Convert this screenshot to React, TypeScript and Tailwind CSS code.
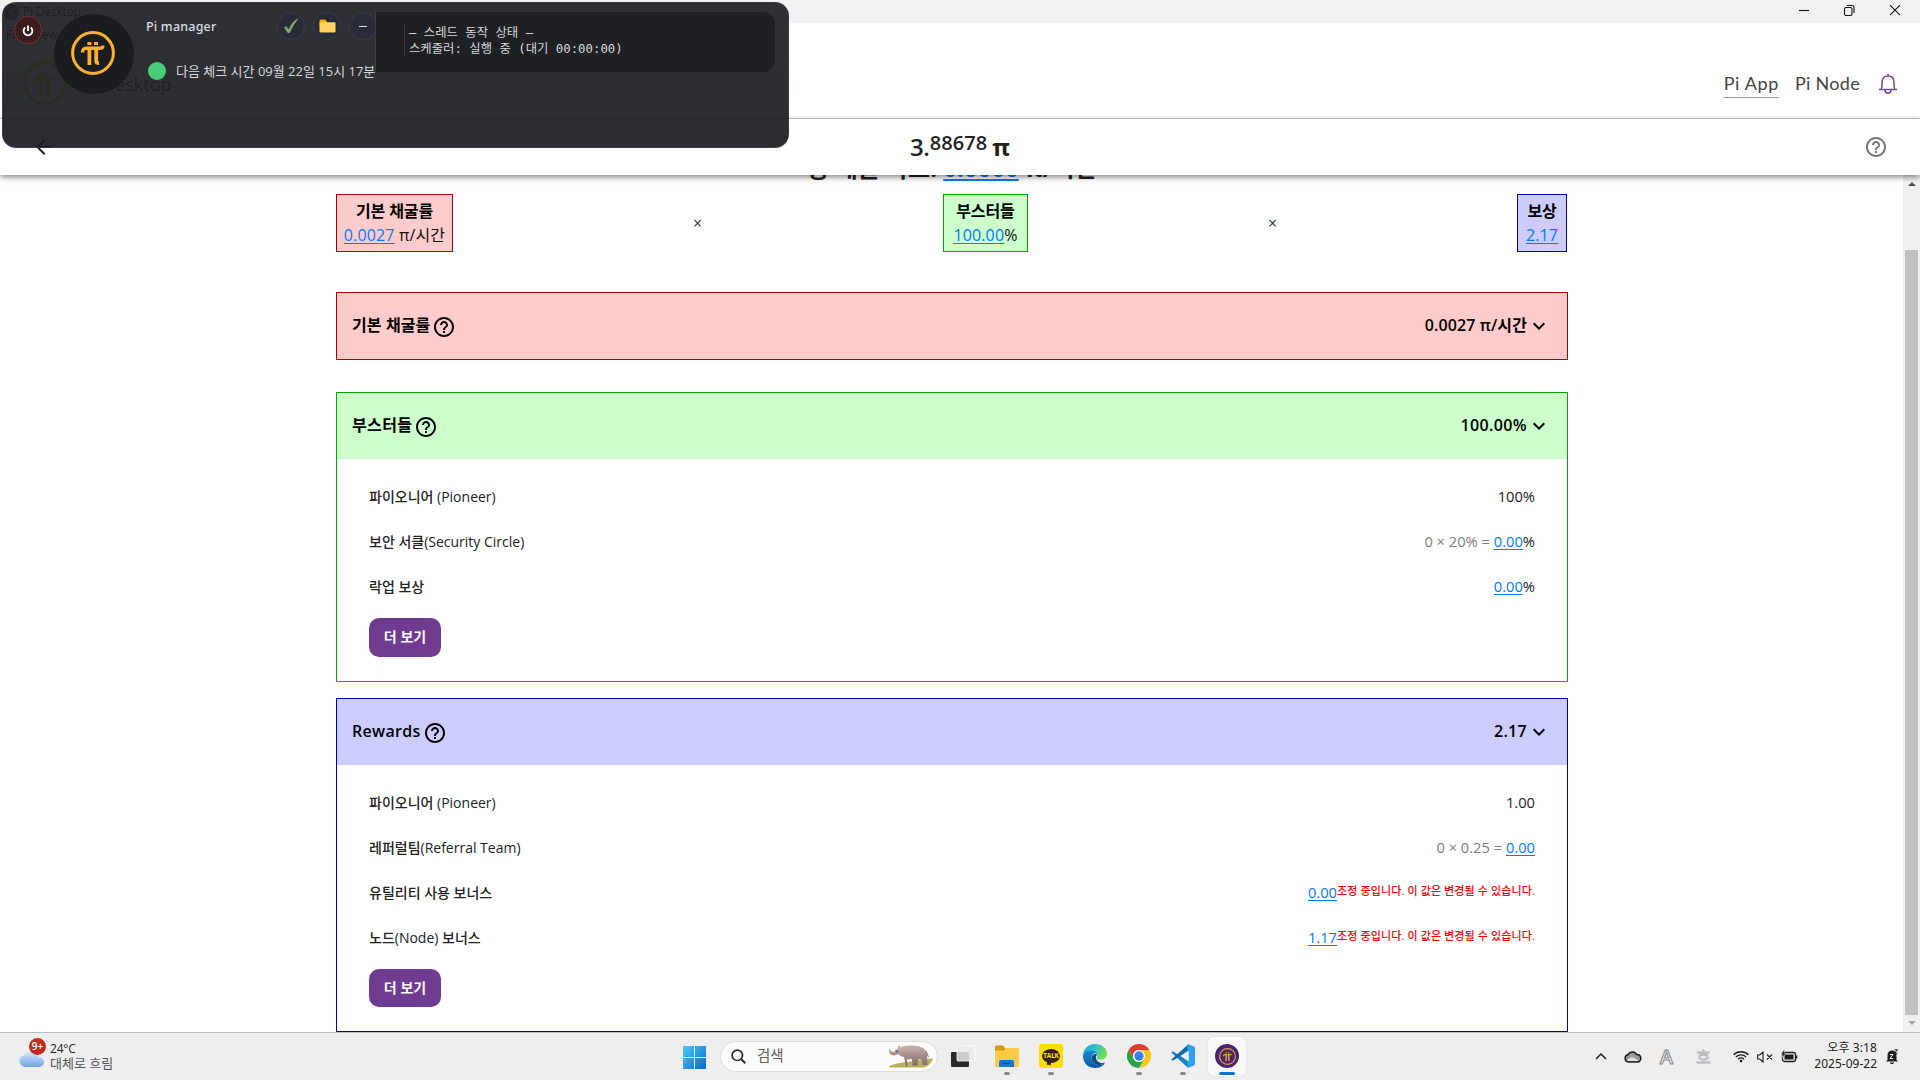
import React from 'react';
import { MdArrowBack, MdExpandMore, MdHelpOutline } from 'react-icons/md';

const KR = "font-['Open_Sans','Noto_Sans_CJK_KR',sans-serif]";

function PiMark({ className, color }: { className?: string; color: string }) {
  return (
    <svg viewBox="0 0 44 44" className={className} fill="none" stroke={color}>
      <circle cx="22" cy="22" r="20.4" strokeWidth="3" />
      <rect x="16.4" y="11" width="4" height="3" fill={color} stroke="none" />
      <rect x="23" y="11" width="4" height="3" fill={color} stroke="none" />
      <path d="M11.6 21.5c0-3 .8-4.3 3.6-4.3h14.4c1.8 0 2.2-.8 2.2-2.6" strokeWidth="3.4" />
      <path d="M18.4 17v17M25.2 17v12.8c0 1.800.8 2.400 2.800 2.400" strokeWidth="3.8" />
    </svg>
  );
}

function TitleBar() {
  return (
    <div className="flex h-[23px] shrink-0 items-center justify-between bg-[#f2f2f2] pl-[3px] pr-[19px]">
      <div className="flex items-center gap-1 text-[12px] text-black">
        <div className="flex h-4 w-4 items-center justify-center rounded-full bg-[#5b2d91]">
          <PiMark color="#f8b133" className="h-3 w-3" />
        </div>
        <span className="leading-[23px] tracking-[-0.2px]">Pi Desktop</span>
      </div>
      <svg width="102" height="12" viewBox="0 0 102 12" fill="none" stroke="#111" strokeWidth="1.1" className="-mt-1">
        <path d="M0 6.500H10" />
        <rect x="45.500" y="3.500" width="7.500" height="8" rx="1.500" />
        <path d="M47.800 1.500H53a2 2 0 0 1 2 2V9" />
        <path d="M91 1.200l10 10M101 1.200l-10 10" />
      </svg>
    </div>
  );
}

function AppHeader() {
  return (
    <div className="flex h-[96px] shrink-0 flex-col border-b border-[#ccc] bg-white">
      <div className="h-6 pl-[6px] pt-1 text-[12px] leading-4 text-black">File&nbsp; View&nbsp; Help</div>
      <div className="flex flex-1 items-start justify-between pl-[23px] pr-[22px] pt-[14px]">
        <div className="flex items-center gap-[15px] text-[18px] text-[#333]">
          <PiMark color="#f8b133" className="h-11 w-11" />
          <span className="mt-[2px]">Pi Desktop</span>
        </div>
        <div className="flex items-start text-[18px] leading-[25px] text-[#444] font-['Lato']">
          <span className="mt-[10px] h-[27px] border-b border-[#999] tracking-[0.65px]">Pi App</span>
          <span className="ml-4 mt-[10px] tracking-[0.3px]">Pi Node</span>
          <svg width="20" height="22" viewBox="0 0 20 22" fill="none" stroke="#7b4a9e" strokeWidth="1.600" className="ml-[18px] mt-3">
            <path d="M1 16.500h18M3.200 16.200C4.200 14.500 4 12.500 4 9.500 4 5.500 6.300 3 10 3s6 2.500 6 6.500c0 3 -.2 5 .8 6.700M10 3V1M7 16.700c.2 4.600 5.800 4.600 6 0" />
          </svg>
        </div>
      </div>
    </div>
  );
}

function SubHeader() {
  return (
    <div className="z-10 grid h-[56px] shrink-0 grid-cols-3 items-center bg-white pl-8 pr-8 shadow-[0_2px_6px_rgba(0,0,0,0.5)]">
      <MdArrowBack className="h-6 w-6 text-[#222]" />
      <div className="flex items-baseline justify-center text-[#222]">
        <span className="text-[24px] font-semibold tracking-[-0.3px]">3.</span>
        <span className="relative -top-[6px] text-[20px] font-semibold tracking-[0.1px]">88678</span>
        <span className="ml-[5px] text-[24px] font-bold">π</span>
      </div>
      <MdHelpOutline className="h-6 w-6 justify-self-end text-[#757575]" />
    </div>
  );
}

function Link({ children }: { children: React.ReactNode }) {
  return <span className="text-[#007bff] underline underline-offset-2">{children}</span>;
}

function FactorCard({ title, tone, children }: { title: string; tone: string; children: React.ReactNode }) {
  return (
    <div className={`flex h-[58px] flex-col items-center border pt-1 text-[16px] leading-6 text-[#111] ${tone}`}>
      <span className="font-bold tracking-[-0.1px] text-black">{title}</span>
      <span className="whitespace-nowrap tracking-[0.15px]">{children}</span>
    </div>
  );
}

function PanelHead({ title, value, tone }: { title: string; value: string; tone: string }) {
  return (
    <div className={`flex h-[66px] items-center justify-between pl-[15px] pr-4 text-[16px] font-semibold text-black ${tone}`}>
      <div className="flex items-center gap-[3px]">
        <span className="-mt-[3px]">{title}</span>
        <MdHelpOutline className="-ml-px mt-[1px] h-6 w-6" />
      </div>
      <div className="flex items-center">
        <span className="-mt-[2px]">{value}</span>
        <MdExpandMore className="h-6 w-6" />
      </div>
    </div>
  );
}

function Row({ label, children }: { label: string; children: React.ReactNode }) {
  return (
    <div className="flex h-[45px] items-center justify-between pb-[2px] text-[14px] text-[#222]">
      <span className="font-medium">{label}</span>
      <span className="-mr-px flex items-center pr-px text-[14.700px]">{children}</span>
    </div>
  );
}

function MoreButton({ height }: { height: string }) {
  return (
    <button className={`mt-2 block w-[72px] rounded-[10px] bg-[#703c91] pb-[2px] text-[14px] font-bold text-white ${height}`}>더 보기</button>
  );
}

function Notice() {
  return <span className="-mt-[2px] text-[11px] font-medium text-[#f00] tracking-[0.12px]">조정 중입니다. 이 값은 변경될 수 있습니다.</span>;
}

function Content() {
  return (
    <div className="flex flex-1 justify-center overflow-hidden pl-px">
      <div className="w-[1232px]">
        <div className="-mt-[25px] h-[44px] whitespace-nowrap text-center text-[24px] font-bold leading-[36px] text-[#222]">
          총 채굴 속도: <Link>0.0060</Link> π/시간
        </div>
        <div className="flex w-[1231px] items-center justify-between">
          <FactorCard title="기본 채굴률" tone="w-[117px] bg-[#fcc] border-[#a00]"><Link>0.0027</Link> π/시간</FactorCard>
          <span className="text-[16px] text-[#333]">×</span>
          <FactorCard title="부스터들" tone="ml-px w-[85px] bg-[#cfc] border-[#0a0]"><Link>100.00</Link>%</FactorCard>
          <span className="text-[16px] text-[#333]">×</span>
          <FactorCard title="보상" tone="w-[50px] bg-[#ccf] border-[#00a]"><Link>2.17</Link></FactorCard>
        </div>
        <section className="mt-10 border border-[#a00]">
          <PanelHead title="기본 채굴률" value="0.0027 π/시간" tone="bg-[#fcc] tracking-[0.1px]" />
        </section>
        <section className="mt-8 h-[290px] border border-[#0a0]">
          <PanelHead title="부스터들" value="100.00%" tone="bg-[#cfc] tracking-[0.35px]" />
          <div className="px-8 pt-4">
            <Row label="파이오니어 (Pioneer)">100%</Row>
            <Row label="보안 서클(Security Circle)">
              <span className="text-[#7d7d7d]">0 × 20% =&nbsp;</span><Link>0.00</Link>%
            </Row>
            <Row label="락업 보상"><Link>0.00</Link>%</Row>
            <MoreButton height="h-[39px]" />
          </div>
        </section>
        <section className="mt-4 h-[334px] border border-[#00a]">
          <PanelHead title="Rewards" value="2.17" tone="bg-[#ccf] tracking-[0.3px]" />
          <div className="px-8 pt-4">
            <Row label="파이오니어 (Pioneer)">1.00</Row>
            <Row label="레퍼럴팀(Referral Team)"><span className="text-[#7d7d7d]">0 × 0.25 =&nbsp;</span><Link>0.00</Link></Row>
            <Row label="유틸리티 사용 보너스"><Link>0.00</Link><Notice /></Row>
            <Row label="노드(Node) 보너스"><Link>1.17</Link><Notice /></Row>
            <MoreButton height="h-[38px]" />
          </div>
        </section>
      </div>
    </div>
  );
}

function ScrollBar() {
  return (
    <div className="flex w-[17px] flex-col items-center bg-[#f1f1f1]">
      <svg width="8" height="4" viewBox="0 0 8 4" className="mt-[7px]"><path d="M0 4L4 0l4 4z" fill="#505050" /></svg>
      <div className="mt-[64px] h-[765px] w-[13px] bg-[#c1c1c1]" />
      <svg width="8" height="4" viewBox="0 0 8 4" className="mt-[6px]"><path d="M0 0l4 4 4-4z" fill="#a3a3a3" /></svg>
    </div>
  );
}

const roundBtn = 'flex h-7 w-7 items-center justify-center rounded-full border border-[#393b47] bg-[#292c36]';

function ManagerWindow() {
  return (
    <div className="absolute left-[2px] top-[2px] z-20 flex h-[146px] w-[787px] rounded-[14px] border border-[#44454a]/60 bg-linear-to-b from-[#202126]/93 to-[#1b1c21]/93">
      <div className="ml-[11px] mt-[13px] flex h-7 w-7 shrink-0 items-center justify-center rounded-full border border-[#7a2e2e] bg-[#3a1c1e]">
        <svg width="12" height="12" viewBox="0 0 12 12" fill="none" stroke="#fff" strokeWidth="1.800" className="mt-[2px]"><path d="M6 .5V6M3.200 2.500a4.400 4.400 0 1 0 5.600 0" /></svg>
      </div>
      <div className="ml-3 mt-[11px] flex h-20 w-20 shrink-0 items-center justify-center rounded-full bg-[#191b1f]/95">
        <PiMark color="#f8b133" className="-mt-[2px] -ml-[2px] h-11 w-11" />
      </div>
      <div className="ml-3 mt-[9px] w-[229px] shrink-0">
        <div className="flex h-7 items-center">
          <span className="mt-[2px] w-[131px] shrink-0 text-[12.500px] font-medium tracking-[0.2px] text-[#dcdce0] font-['Noto_Sans']">Pi manager</span>
          <div className="flex shrink-0 gap-2">
            <div className={roundBtn}>
              <svg width="16" height="16" viewBox="0 0 16 16"><path d="M1 9.500L3.200 8l2.300 3.500C8 6.500 10.500 3 14.500.5l.5.800C11.500 5.500 9 10 6.800 15H4.800z" fill="#86a56c" /></svg>
            </div>
            <div className={roundBtn}>
              <svg width="17" height="14" viewBox="0 0 17 14"><path d="M.5 2A1.500 1.500 0 0 1 2 .5h4l2 2V6H.5z" fill="#f9a602" /><rect x=".5" y="3.200" width="16" height="10.300" rx="1.200" fill="#ffd35c" /></svg>
            </div>
            <div className={roundBtn}><span className="h-px w-2 bg-[#ddd]" /></div>
          </div>
        </div>
        <div className="mt-[22px] flex items-center pl-[2px]">
          <span className="h-[18px] w-[18px] shrink-0 rounded-full bg-[#4bcd76]" />
          <span className="ml-[10px] whitespace-nowrap text-[13px] leading-[18px] text-[#d8d9dd]">다음 체크 시간 09월 22일 15시 17분</span>
        </div>
      </div>
      <div className="mt-[9px] h-[60px] w-[400px] shrink-0 rounded-r-xl border-l border-[#3c3d42] bg-[#1f2024] pl-7 pt-[13px]">
        <div className="h-8 whitespace-pre border-l border-[#393a3f] pl-1 text-[12.350px] leading-4 text-[#d8d9dc] font-['DejaVu_Sans_Mono','Noto_Sans_CJK_KR',monospace]">
          {'— 스레드 동작 상태 —\n스케줄러: 실행 중 (대기 00:00:00)'}
        </div>
      </div>
    </div>
  );
}

function Slot({ dot, active, children }: { dot?: boolean; active?: boolean; children: React.ReactNode }) {
  return (
    <div className={`flex h-[39px] w-[38px] flex-col items-center rounded-[5px] pt-[7px] ${active ? 'bg-[#f9f9f9] shadow-[0_0_1px_rgba(0,0,0,0.25)]' : ''}`}>
      {children}
      {dot && <span className="mt-1 h-[3px] w-[6px] rounded-full bg-[#8a8a8a]" />}
      {active && <span className="mt-1 h-[3px] w-4 rounded-full bg-[#0f74cc]" />}
    </div>
  );
}

function Rhino() {
  return (
    <svg width="46" height="26" viewBox="0 0 46 26">
      <defs><linearGradient id="hide" x1="0" y1="0" x2="0" y2="1"><stop offset="0" stopColor="#cdb8ac" /><stop offset="1" stopColor="#80646c" /></linearGradient></defs>
      <path d="M1 23.500c3-2.500 9-3 14-4 10-1 22-4 30-4-1 4-5 8-9 9H5c-2 0-4 0-4-1z" fill="#b5b257" />
      <path d="M1 5.500c1 2 3 3.500 5 3.500 1-2 2.500-3 4-3.500L10.500 1.500l2 3c2.500-1.500 5-2 9-2 6 0 13 .5 16 5 2 3 2 5 1.500 8l.5 6.500h-5l-.5-5-3.500-1-1 6.500h-5l-.5-6.500-5 .5.500 7H18l-2-9.500c-3-.5-4-1.500-5.500-3L6 12.500c-2 0-4.500-1-4.500-3C1 8.500 1 7 1 5.500z" fill="url(#hide)" />
      <path d="M38 8l2.500 6" stroke="#8a6e70" strokeWidth="1" />
      <circle cx="9" cy="8.500" r=".8" fill="#33262a" />
    </svg>
  );
}

function Taskbar() {
  return (
    <div className="flex h-[48px] shrink-0 items-center border-t border-[#b9b9b9] bg-[#eee]">
      <div className="flex w-[682px] items-center pl-[18px]">
        <div className="relative h-8 w-8">
          <svg width="28" height="32" viewBox="0 0 28 32">
            <defs><linearGradient id="cl" x1="0" y1="0" x2="0" y2="1"><stop offset="0" stopColor="#d8e9fb" /><stop offset="1" stopColor="#6fa4e6" /></linearGradient></defs>
            <path d="M7 26a6 6 0 0 1-.5-11.900A8 8 0 0 1 21 16a5 5 0 0 1 0 10z" fill="url(#cl)" />
          </svg>
          <span className="absolute left-[11px] top-[-3px] flex h-[17px] w-[17px] items-center justify-center rounded-full bg-[#c42b1c] text-[10px] font-semibold text-white">9+</span>
        </div>
        <div className="-mt-[2px] text-[12px] leading-[15px] text-[#222]"><div className="tracking-[-0.2px]">24°C</div><div className="text-[13px] text-[#555]">대체로 흐림</div></div>
      </div>
      <div className="flex w-[580px] items-center">
        <svg width="24" height="24" viewBox="0 0 24 24">
          <defs><linearGradient id="win" x1="0" y1="0" x2="1" y2="1"><stop offset="0" stopColor="#4cc9fa" /><stop offset="1" stopColor="#0669c8" /></linearGradient></defs>
          <path d="M1 1h11v11H1zM13 1h11v11H13zM1 13h11v11H1zM13 13h11v11H13z" fill="url(#win)" />
        </svg>
        <div className="-mt-px ml-[14px] flex h-[31px] w-[218px] items-center rounded-full border border-[#dedede] bg-[#fbfbfb] pl-[10px] pr-[3px]">
          <svg width="15" height="15" viewBox="0 0 15 15" fill="none" stroke="#2b2b2b" strokeWidth="1.700"><circle cx="6.300" cy="6.300" r="5.200" /><path d="M10 10l4.300 4.300" strokeWidth="2" /></svg>
          <span className="ml-[11px] flex-1 text-[14.500px] text-[#5c5c5c]">검색</span>
          <Rhino />
        </div>
        <div className="ml-[6px] flex gap-[6px]">
          <Slot>
            <svg width="26" height="24" viewBox="0 0 26 24"><rect x="1" y="8" width="18" height="15" rx="1" fill="#2a2a2a" /><rect x="7" y="2" width="18" height="15" rx="1" fill="#e9e9e9" fillOpacity=".85" stroke="#fff" strokeWidth=".8" /></svg>
          </Slot>
          <Slot dot>
            <svg width="24" height="24" viewBox="0 0 24 24"><path d="M0 3a1.500 1.500 0 0 1 1.500-1.500H8l2.500 3V8H0z" fill="#d9960f" /><path d="M0 6.500h9l2-2.500h11.500A1.500 1.500 0 0 1 24 5.500V22a1 1 0 0 1-1 1H1a1 1 0 0 1-1-1z" fill="#fecb45" /><path d="M4 18a2 2 0 0 1 2-2h11a2 2 0 0 1 2 2v5H4z" fill="#1478cf" /><path d="M8 19.500h7" stroke="#0a559e" strokeWidth="1.200" /></svg>
          </Slot>
          <Slot dot>
            <div className="flex h-6 w-6 items-center justify-center rounded-[3px] bg-[#fae100]">
              <div className="relative flex h-[14px] w-[18px] items-center justify-center rounded-[50%] bg-[#3a1d1d] text-[6.500px] font-bold leading-none tracking-[-0.2px] text-[#fae100]">
                <span className="absolute bottom-[-2px] left-[5px] h-[4px] w-[4px] rotate-12 bg-[#3a1d1d]" />
                <span className="relative">TALK</span>
              </div>
            </div>
          </Slot>
          <Slot>
            <svg width="24" height="24" viewBox="0 0 24 24">
              <defs>
                <linearGradient id="e1" x1="0" y1="0" x2="1" y2=".4"><stop offset="0" stopColor="#1b9de2" /><stop offset=".55" stopColor="#35c1c9" /><stop offset="1" stopColor="#6be04d" /></linearGradient>
                <linearGradient id="e2" x1="0" y1="0" x2="0" y2="1"><stop offset="0" stopColor="#1887d0" /><stop offset="1" stopColor="#0c59a4" /></linearGradient>
              </defs>
              <path d="M0 12C0 5 5 0 12 0s12 4.500 12 9.500c0 4-3 6-6.500 6-3 0-4-1-3.500-2 1-1.500.8-5.500-4-5.500C5 8 1 10 0 12z" fill="url(#e1)" />
              <path d="M0 12c.5-3 4-5.500 8-5.500 3.500 0 5.500 1.500 6.500 3.500-3-2-6 0-6 4 0 5 5 8 11 6.500l2.800-1.200C20 22.500 16.500 24 12 24 5 24 0 19 0 12z" fill="url(#e2)" />
              <path d="M8.500 14c0 5 5 7.500 9 7 2-.3 4-1.500 4.500-2.400-4 1.400-8.500-.6-9-4.600-.2-1.500.7-2.500 1-3.500-2.500-1.500-5.500.500-5.500 3.500z" fill="#114a8b" />
            </svg>
          </Slot>
          <Slot dot>
            <svg width="24" height="24" viewBox="0 0 24 24">
              <path d="M1.600 6A12 12 0 0 1 22.400 6H12a6 6 0 0 0-5.200 9z" fill="#e33b2e" />
              <path d="M12 6h10.400A12 12 0 0 1 12 24l5.200-9z" fill="#fcc31e" />
              <path d="M1.600 6l5.200 9A6 6 0 0 0 17.200 15L12 24A12 12 0 0 1 1.600 6z" fill="#2ba24c" />
              <circle cx="12" cy="12" r="6" fill="#fff" /><circle cx="12" cy="12" r="4.700" fill="#3b7ded" />
            </svg>
          </Slot>
          <Slot dot>
            <svg width="24" height="24" viewBox="0 0 24 24"><path d="M1.800 7.200L.3 8.500 17 23.800 18 17.500z" fill="#1a7fc4" /><path d="M17.500.2L.3 15.500l1.500 1.300L18.500 6z" fill="#0d6bb0" /><path d="M17.500.2L23 2.600a1.500 1.500 0 0 1 1 1.400v16a1.500 1.500 0 0 1-1 1.400l-5.500 2.400c-.600.2-1-.2-1-.8V1c0-.5.500-1 1-.8z" fill="#28a3ef" /><path d="M17.800 6.500v11L10.500 12z" fill="#eee" /></svg>
          </Slot>
          <Slot active>
            <div className="flex h-6 w-6 items-center justify-center rounded-full bg-[#47246b]"><PiMark color="#dfa04a" className="h-[17px] w-[17px]" /></div>
          </Slot>
        </div>
      </div>
      <div className="flex flex-1 items-center justify-end pr-[21px]">
        <svg width="12" height="7" viewBox="0 0 12 7" fill="none" stroke="#222" strokeWidth="1.500"><path d="M1 6l5-5 5 5" /></svg>
        <svg width="18" height="12" viewBox="0 0 18 12" className="ml-[17px]"><path d="M4.500 11a3.700 3.700 0 0 1-.5-7.300C6 0 11 0 12.500 3.500c5.500-.3 5.500 7.500 1 7.500z" fill="#999" stroke="#1c1c1c" strokeWidth="1.500" /><path d="M3 10c3-5 7-5 11 0z" fill="#ddd" /></svg>
        <span className="ml-[15px] w-[18px] text-center text-[20px] font-semibold leading-5 text-[#eee] [-webkit-text-stroke:1px_#888]">A</span>
        <span className="ml-[19px] w-[18px] text-center text-[16px] leading-5 text-[#eee] [-webkit-text-stroke:0.8px_#b5b5b5]">호</span>
        <svg width="16" height="13" viewBox="0 0 16 13" fill="none" stroke="#1c1c1c" strokeWidth="1.300" className="ml-[21px]"><path d="M.6 4.800a10.500 10.500 0 0 1 14.800 0M2.900 7a7.300 7.300 0 0 1 10.200 0M5 9.200a4.300 4.300 0 0 1 6 0" /><circle cx="8" cy="11" r="1.300" fill="#1c1c1c" stroke="none" /></svg>
        <svg width="16" height="12" viewBox="0 0 16 12" fill="none" stroke="#1c1c1c" strokeWidth="1.100" className="ml-[8px]"><path d="M.6 4h2.200L6 1v10L2.800 8H.6zM10 3.500l5 5M15 3.500l-5 5" /></svg>
        <svg width="17" height="14" viewBox="0 0 17 14" className="-mt-[2px] ml-[8px]"><rect x="1.500" y="3.500" width="13" height="9" rx="2" fill="none" stroke="#1c1c1c" strokeWidth="1.300" /><rect x="3.500" y="5.500" width="9" height="5" fill="#1c1c1c" /><path d="M15.500 6.500v3" stroke="#1c1c1c" strokeWidth="1.600" /><path d="M3.500 0L0 5h2L1 9l4-5H3z" fill="#1c1c1c" stroke="#eee" strokeWidth=".4" /></svg>
        <div className="-mt-[2px] ml-[16px] text-right text-[12px] leading-4 text-[#1c1c1c] font-['Noto_Sans','Noto_Sans_CJK_KR',sans-serif]"><div className="tracking-[0.1px]">오후 3:18</div><div>2025-09-22</div></div>
        <svg width="14" height="16" viewBox="0 0 13 16" className="ml-2"><path d="M2 11V6a4.500 4.500 0 0 1 9 0v5l1.500 1.500H.5zM4.500 13.500h4c0 2-4 2-4 0z" fill="#1c1c1c" /><path d="M4.500 5.500h3l-3 4h3" stroke="#eee" strokeWidth="1" fill="none" /><path d="M9 .8h3l-3 3.500h3" stroke="#1c1c1c" strokeWidth="1" fill="none" /></svg>
      </div>
    </div>
  );
}

export default function App() {
  return (
    <div className={`relative flex h-[1080px] w-[1920px] flex-col overflow-hidden bg-white ${KR}`}>
      <TitleBar />
      <AppHeader />
      <SubHeader />
      <div className="flex min-h-0 flex-1">
        <Content />
        <ScrollBar />
      </div>
      <Taskbar />
      <ManagerWindow />
    </div>
  );
}
